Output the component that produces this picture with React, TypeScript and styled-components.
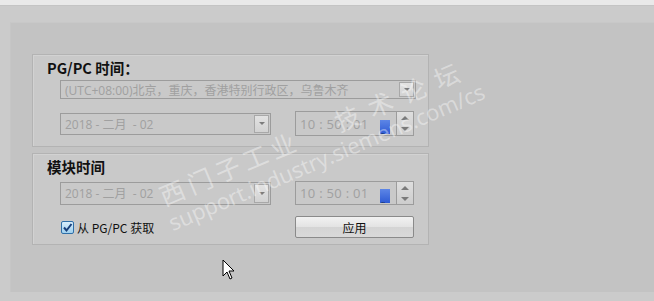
import React from "react";
import styled, { createGlobalStyle } from "styled-components";

const Global = createGlobalStyle`
  html, body { margin: 0; padding: 0; }
  body { width: 654px; height: 301px; overflow: hidden; background: #cbcbcb; font-family: "Open Sans", "Noto Sans CJK SC", sans-serif; }
`;

const Page = styled.div`
  position: relative;
  width: 654px;
  height: 301px;
  display: flex;
  flex-direction: column;
  background: #cbcbcb;
  overflow: hidden;
`;

const TopStrip = styled.div`
  height: 5px;
  background: #e9e9e9;
  border-bottom: 1px solid #c4c4c4;
`;

const Outer = styled.div`
  flex: 1;
  padding: 16px 0 9px 10px;
  display: flex;
`;

const Inner = styled.div`
  flex: 1;
  background: #c3c3c3;
  border-top: 1px solid #c8c8c8;
  border-left: 1px solid #c6c6c6;
  padding: 31px 0 0 21px;
  display: flex;
  flex-direction: column;
  gap: 6px;
`;

const Group = styled.div<{ $h: number }>`
  width: 397px;
  height: ${(p) => p.$h}px;
  box-sizing: border-box;
  background: #c9c9c9;
  border: 1px solid #b3b3b3;
  box-shadow: inset 1px 1px 0 #d2d2d2;
  padding: 4px 0 0 27px;
  display: flex;
  flex-direction: column;
  align-items: flex-start;
`;

const Title = styled.div`
  margin-left: -13px;
  font-family: "Noto Sans CJK SC", sans-serif;
  font-weight: 700;
  font-size: 14.5px;
  line-height: 17px;
  color: #111;
`;

const Row = styled.div<{ $mt: number }>`
  margin-top: ${(p) => p.$mt}px;
  display: grid;
  grid-template-columns: 211px 119px;
  column-gap: 24px;
  align-items: center;
`;

const Field = styled.div<{ $w?: number; $h: number }>`
  position: relative;
  width: ${(p) => (p.$w ? `${p.$w}px` : "auto")};
  height: ${(p) => p.$h}px;
  box-sizing: border-box;
  border: 1px solid #9c9c9c;
  background: #c9c9c9;
  display: flex;
  align-items: center;
  padding-left: 4px;
  font-family: "Open Sans", "Noto Sans CJK SC", sans-serif;
  font-size: 12px;
  color: #a0a0a0;
  white-space: nowrap;
  overflow: hidden;
`;

const Combo = styled(Field)`
  margin-top: 4px;
`;

const TimeWrap = styled.div<{ $h: number }>`
  display: flex;
  height: ${(p) => p.$h}px;
`;

const TimeField = styled(Field)`
  flex: 1;
  border-right: none;
`;

const TimeText = styled.span`
  font-size: 13px;
  letter-spacing: 0.3px;
`;

const DropBtn = styled.div`
  position: absolute;
  right: 1px;
  top: 1px;
  bottom: 1px;
  width: 15px;
  box-sizing: border-box;
  border: 1px solid #a8a8a8;
  background: linear-gradient(#e2e2e2, #d2d2d2);
  display: flex;
  align-items: center;
  justify-content: center;
  &::after {
    content: "";
    border-left: 3px solid transparent;
    border-right: 3px solid transparent;
    border-top: 3px solid #7c7c7c;
  }
`;

const Spinner = styled.div`
  width: 18px;
  box-sizing: border-box;
  border: 1px solid #9c9c9c;
  background: linear-gradient(#dedede, #cdcdcd);
  display: flex;
  flex-direction: column;
  align-items: center;
  justify-content: space-around;
`;

const Arrow = styled.span<{ $up?: boolean }>`
  width: 0;
  height: 0;
  border-left: 4px solid transparent;
  border-right: 4px solid transparent;
  ${(p) => (p.$up ? "border-bottom: 4px solid #7a7a7a;" : "border-top: 4px solid #7a7a7a;")}
`;

const BlueMark = styled.div`
  position: absolute;
  right: 6px;
  bottom: 1px;
  width: 10px;
  height: 14px;
  background: linear-gradient(#5d86e6, #2e5bd4);
  &::after {
    content: "...";
    position: absolute;
    left: 1px;
    bottom: -2px;
    font-size: 8px;
    color: #1a2a55;
    letter-spacing: -1px;
  }
`;

const Check = styled.label`
  margin-left: 1px;
  display: flex;
  align-items: center;
  gap: 3px;
  font-family: "Noto Sans CJK SC", sans-serif;
  font-size: 12px;
  color: #111;
`;

const Box = styled.div`
  width: 13px;
  height: 13px;
  box-sizing: border-box;
  border: 1px solid #2f6fa8;
  border-radius: 2px;
  background: linear-gradient(#d8eefc, #9fd0ee);
  display: flex;
  align-items: center;
  justify-content: center;
`;

const ApplyButton = styled.div`
  height: 22px;
  box-sizing: border-box;
  border: 1px solid #8a8a8a;
  border-radius: 2px;
  background: linear-gradient(#f2f2f2 0%, #e3e3e3 50%, #d4d4d4 51%, #d9d9d9 100%);
  display: flex;
  align-items: center;
  justify-content: center;
  font-family: "Noto Sans CJK SC", sans-serif;
  font-size: 12px;
  color: #111;
`;

const Watermark = styled.div`
  position: absolute;
  left: 174px;
  top: 178px;
  height: 56px;
  transform: rotate(-23deg);
  transform-origin: left bottom;
  pointer-events: none;
  display: flex;
  flex-direction: column;
  color: rgba(255, 255, 255, 0.4);
`;

const WmBig = styled.div`
  font-family: "Noto Sans CJK SC", sans-serif;
  font-size: 25px;
  letter-spacing: 5px;
  line-height: 33px;
  white-space: nowrap;
  padding-left: 2px;
  display: flex;
  gap: 40px;
`;

const WmSpaced = styled.span`
  letter-spacing: 11px;
`;

const WmSmall = styled.div`
  font-family: "Open Sans", sans-serif;
  font-size: 22px;
  line-height: 23px;
  white-space: nowrap;
`;

const Cursor = styled.svg`
  position: absolute;
  left: 222px;
  top: 259px;
`;

function TimeBox({ h }: { h: number }) {
  return (
    <TimeWrap $h={h}>
      <TimeField $h={h}>
        <TimeText>10 : 50 : 01</TimeText>
        <BlueMark />
      </TimeField>
      <Spinner>
        <Arrow $up />
        <Arrow />
      </Spinner>
    </TimeWrap>
  );
}

function DateBox({ h }: { h: number }) {
  return (
    <Field $h={h}>
      2018 - 二月&nbsp;&nbsp;- 02
      <DropBtn />
    </Field>
  );
}

export default function App() {
  return (
    <Page>
      <Global />
      <TopStrip />
      <Outer>
        <Inner>
          <Group $h={93}>
            <Title>PG/PC 时间：</Title>
            <Combo $w={356} $h={19}>
              (UTC+08:00)北京，重庆，香港特别行政区，乌鲁木齐
              <DropBtn />
            </Combo>
            <Row $mt={12}>
              <DateBox h={22} />
              <TimeBox h={25} />
            </Row>
          </Group>
          <Group $h={92}>
            <Title>模块时间</Title>
            <Row $mt={6}>
              <DateBox h={23} />
              <TimeBox h={24} />
            </Row>
            <Row $mt={11}>
              <Check>
                <Box>
                  <svg width="11" height="11" viewBox="0 0 11 11">
                    <path d="M2 5.5 L4.5 8.5 L9.5 2" stroke="#1a3f7a" strokeWidth="2" fill="none" />
                  </svg>
                </Box>
                <span>从 PG/PC 获取</span>
              </Check>
              <ApplyButton>应用</ApplyButton>
            </Row>
          </Group>
        </Inner>
      </Outer>
      <Watermark>
        <WmBig>
          <span>西门子工业</span>
          <WmSpaced>技术论坛</WmSpaced>
        </WmBig>
        <WmSmall>support.industry.siemens.com/cs</WmSmall>
      </Watermark>
      <Cursor width="14" height="22" viewBox="0 0 14 22">
        <path d="M1 1 L1 17 L5 13 L8 20 L10 19 L7 12 L12 12 Z" fill="#fff" stroke="#000" strokeWidth="1" />
      </Cursor>
    </Page>
  );
}
